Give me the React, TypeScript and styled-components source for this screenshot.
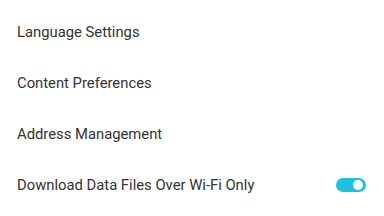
import React, { useState } from "react";
import styled, { createGlobalStyle } from "styled-components";

const GlobalStyle = createGlobalStyle`
  html, body {
    margin: 0;
    padding: 0;
    background: #ffffff;
    font-family: Roboto, "Liberation Sans", sans-serif;
  }
`;

const List = styled.div`
  display: flex;
  flex-direction: column;
  padding-top: 6px;
  width: 384px;
`;

const Row = styled.div`
  display: flex;
  align-items: center;
  justify-content: space-between;
  height: 51px;
  padding: 0 18px 0 17px;
  box-sizing: border-box;
`;

const Label = styled.span`
  font-size: 14.8px;
  color: #333333;
`;

const Track = styled.button<{ $on: boolean }>`
  position: relative;
  width: 30px;
  height: 14px;
  border: none;
  padding: 0;
  border-radius: 7px;
  background: ${(p) => (p.$on ? "#1cc0e0" : "#c8c8c8")};
  cursor: pointer;
`;

const Knob = styled.span<{ $on: boolean }>`
  position: absolute;
  top: 2px;
  left: ${(p) => (p.$on ? "17px" : "2px")};
  width: 10px;
  height: 10px;
  border-radius: 50%;
  background: #ffffff;
`;

const items = ["Language Settings", "Content Preferences", "Address Management"];

export default function App() {
  const [wifiOnly, setWifiOnly] = useState(true);
  return (
    <>
      <GlobalStyle />
      <List>
        {items.map((t) => (
          <Row key={t}>
            <Label>{t}</Label>
          </Row>
        ))}
        <Row>
          <Label>Download Data Files Over Wi-Fi Only</Label>
          <Track $on={wifiOnly} onClick={() => setWifiOnly(!wifiOnly)}>
            <Knob $on={wifiOnly} />
          </Track>
        </Row>
      </List>
    </>
  );
}
